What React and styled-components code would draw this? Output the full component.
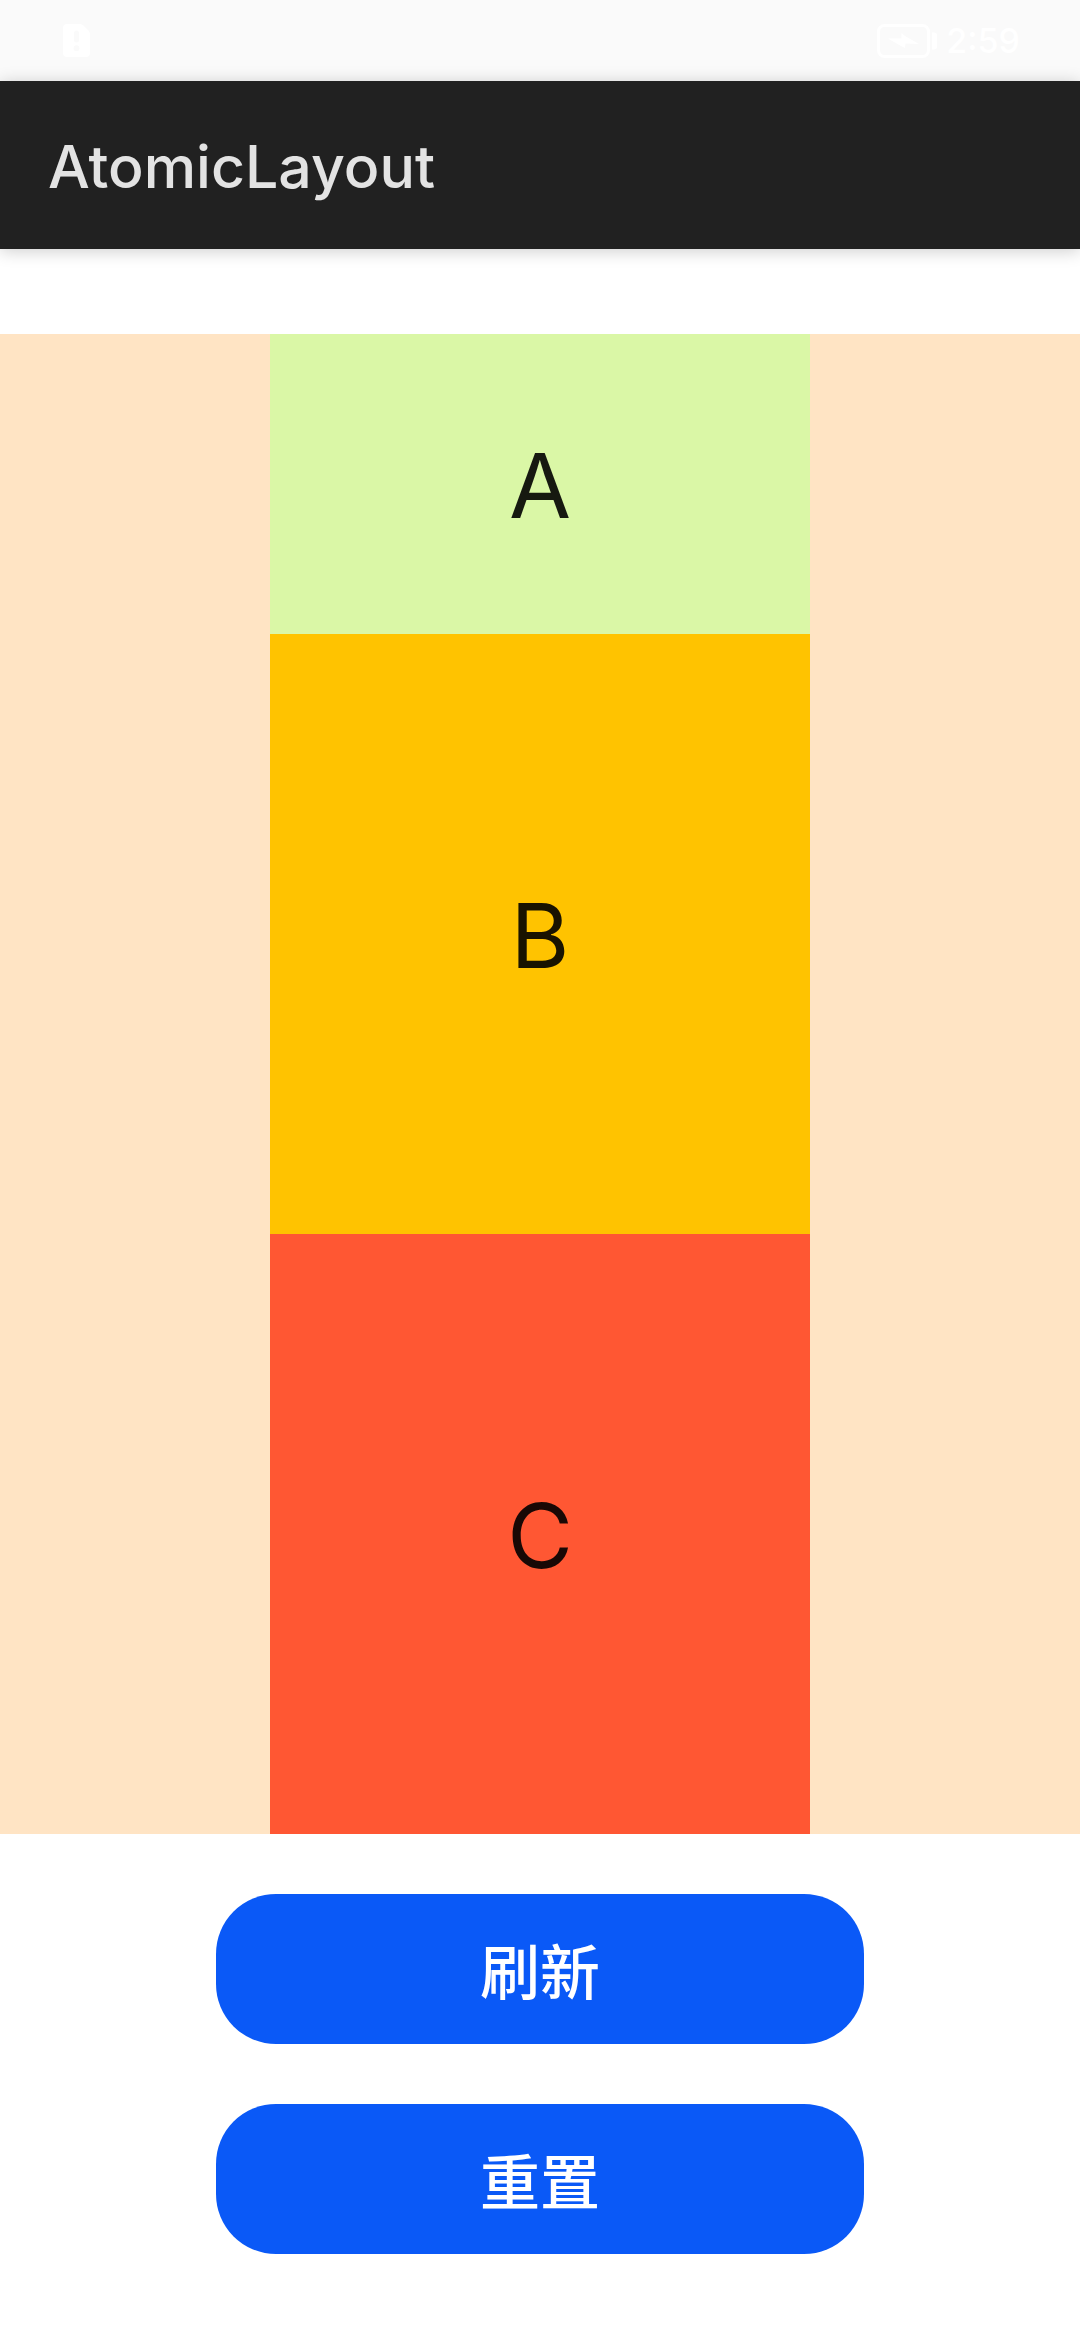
import React, { useState } from "react";
import styled, { createGlobalStyle } from "styled-components";

const GlobalStyle = createGlobalStyle`
  * {
    box-sizing: border-box;
  }
  body {
    margin: 0;
    background: #ffffff;
    font-family: Inter, "Noto Sans CJK SC", sans-serif;
  }
`;

const Page = styled.div`
  display: flex;
  flex-direction: column;
  min-height: 100vh;
`;

const StatusBar = styled.header`
  display: flex;
  align-items: center;
  justify-content: space-between;
  height: 81px;
  padding: 0 60px 0 63px;
  background: #fafafa;
  color: #ffffff;
`;

const StatusGroup = styled.div`
  display: flex;
  align-items: center;
  gap: 9px;
`;

const Clock = styled.time`
  font-size: 34px;
  font-weight: 500;
  line-height: 48px;
`;

const AppBar = styled.div`
  display: flex;
  align-items: center;
  height: 168px;
  padding: 4px 48px 0;
  background: #212121;
  box-shadow: 0 2px 16px rgba(0, 0, 0, 0.2);
`;

const Title = styled.h1`
  margin: 0;
  color: #e3e3e3;
  font-size: 59px;
  font-weight: 500;
  line-height: 80px;
`;

const Content = styled.main`
  display: flex;
  flex-direction: column;
  padding: 85px 0;
`;

const Stack = styled.section`
  display: flex;
  flex-direction: column;
  align-items: center;
  background: #ffe4c4;
`;

const Cell = styled.div`
  display: flex;
  align-items: center;
  justify-content: center;
  width: 50%;
  height: ${(props) => props.$height}px;
  padding-top: 4px;
  background: ${(props) => props.$color};
  color: rgba(0, 0, 0, 0.9);
  font-size: 90px;
  line-height: 120px;
`;

const Actions = styled.div`
  display: flex;
  flex-direction: column;
  align-items: center;
  gap: 60px;
  padding-top: 60px;
`;

const ActionButton = styled.button`
  width: 60%;
  height: 150px;
  padding: 0;
  border: 0;
  border-radius: 60px;
  background: #0a59f7;
  color: #ffffff;
  font-family: "Noto Sans CJK SC", sans-serif;
  font-size: 60px;
  font-weight: 500;
  line-height: 80px;
  cursor: pointer;
`;

const initialCells = [
  { name: "A", height: 300, color: "#daf7a6" },
  { name: "B", height: 600, color: "#ffc300" },
  { name: "C", height: 600, color: "#ff5733" },
];

function SimAlertIcon() {
  return (
    <svg width="27" height="33" viewBox="0 0 27 33" aria-hidden="true">
      <path
        fill="currentColor"
        fillRule="evenodd"
        d="M4 0H17Q19 0 20.500 1.500L25.500 6.500Q27 8 27 10V29Q27 33 23 33H4Q0 33 0 29V4Q0 0 4 0ZM13.500 6.500A2.500 2.500 0 0 0 11 9V16A2.500 2.500 0 0 0 16 16V9A2.500 2.500 0 0 0 13.500 6.500ZM13.500 21.300A2.900 2.900 0 1 0 13.500 27.100A2.900 2.900 0 1 0 13.500 21.300Z"
      />
    </svg>
  );
}

function BatteryIcon() {
  return (
    <svg width="60" height="34" viewBox="0 0 60 34" aria-hidden="true">
      <rect x="1.500" y="1.500" width="50" height="31" rx="6" fill="none" stroke="currentColor" strokeWidth="3" />
      <path fill="currentColor" d="M55 8.500H57Q60 8.500 60 11.500V22.500Q60 25.500 57 25.500H55Z" />
      <path fill="currentColor" d="M11 14.500L24 22L28 24L28.500 19.500L42 20L28 12L24.500 9L24.500 14.500Z" />
    </svg>
  );
}

export default function App() {
  const [cells, setCells] = useState(initialCells);

  return (
    <Page>
      <GlobalStyle />
      <StatusBar>
        <SimAlertIcon />
        <StatusGroup>
          <BatteryIcon />
          <Clock>2:59</Clock>
        </StatusGroup>
      </StatusBar>
      <AppBar>
        <Title>AtomicLayout</Title>
      </AppBar>
      <Content>
        <Stack>
          {cells.map((cell) => (
            <Cell key={cell.name} $height={cell.height} $color={cell.color}>
              {cell.name}
            </Cell>
          ))}
        </Stack>
        <Actions>
          <ActionButton type="button" onClick={() => setCells([...cells])}>
            刷新
          </ActionButton>
          <ActionButton type="button" onClick={() => setCells(initialCells)}>
            重置
          </ActionButton>
        </Actions>
      </Content>
    </Page>
  );
}
